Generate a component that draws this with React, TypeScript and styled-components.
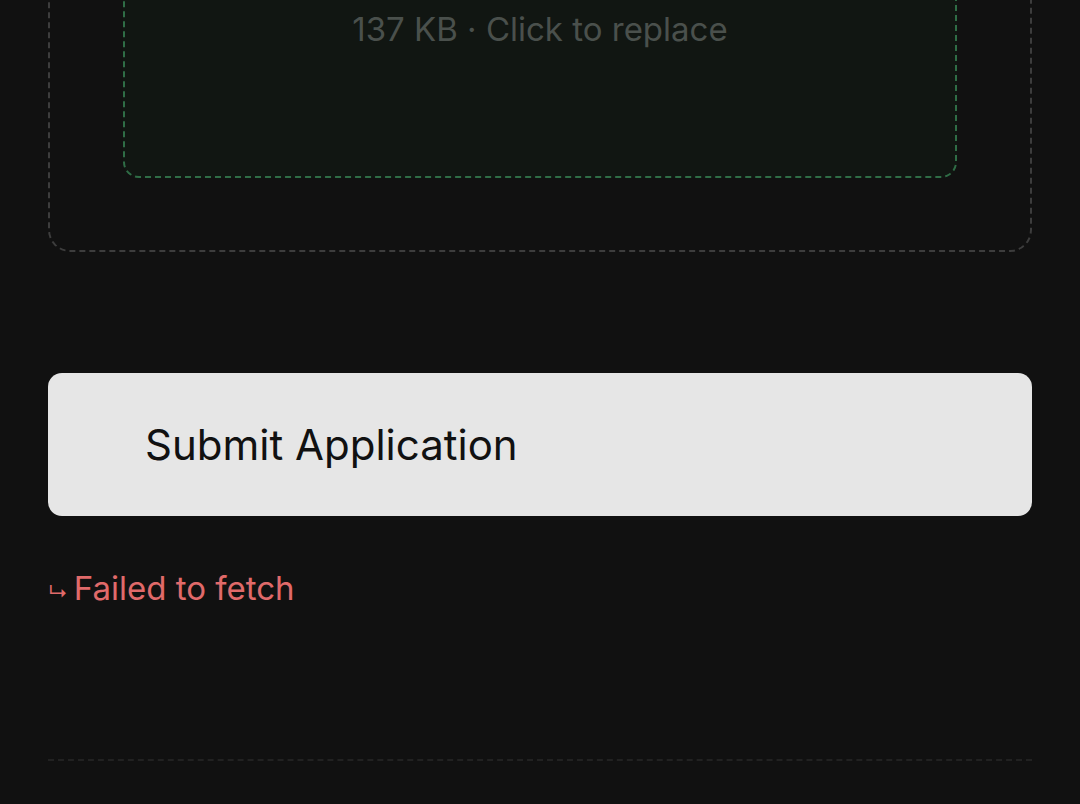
import React from 'react';
import styled, { createGlobalStyle } from 'styled-components';

const GlobalStyle = createGlobalStyle`
  html, body {
    margin: 0;
    padding: 0;
    background: #111111;
    overflow: hidden;
  }
  body {
    font-family: Inter, "Noto Sans", "Liberation Sans", sans-serif;
    -webkit-font-smoothing: antialiased;
  }
`;

const Page = styled.div`
  width: 1080px;
  height: 804px;
  box-sizing: border-box;
  padding: 0 48px;
  display: flex;
  flex-direction: column;
  overflow: hidden;
`;

const DropZone = styled.div`
  margin-top: -241px;
  padding: 73px 73px 72px;
  border: 2px dashed #3d3d3d;
  border-radius: 22px;
  box-sizing: border-box;
`;

const FilePreview = styled.div`
  border: 2px dashed #2f6d46;
  border-radius: 16px;
  background: #111612;
  padding: 120px 40px 127px;
  display: flex;
  flex-direction: column;
  align-items: center;
  gap: 12px;
`;

const FileName = styled.div`
  font-size: 34px;
  color: #6b726e;
`;

const FileMeta = styled.div`
  font-size: 33px;
  line-height: 40px;
  color: #4a504c;
`;

const SubmitButton = styled.button`
  margin-top: 121px;
  height: 143px;
  border: none;
  border-radius: 14px;
  background: #e6e6e6;
  color: #111111;
  font-family: inherit;
  font-size: 42px;
  text-align: left;
  padding: 0 97px;
  cursor: pointer;
`;

const ErrorLine = styled.div`
  margin-top: 52px;
  display: flex;
  align-items: baseline;
  gap: 6px;
  color: #e06a6a;
  font-size: 33px;
  line-height: 40px;
`;

const Arrow = styled.span`
  font-size: 20px;
`;

const Divider = styled.hr`
  margin: 146px 0 0;
  border: none;
  border-top: 2px dashed #222222;
`;

export default function App() {
  return (
    <>
      <GlobalStyle />
      <Page>
        <DropZone>
          <FilePreview>
            <FileName>resume.pdf</FileName>
            <FileMeta>137 KB · Click to replace</FileMeta>
          </FilePreview>
        </DropZone>
        <SubmitButton type="button">Submit Application</SubmitButton>
        <ErrorLine>
          <Arrow>↳</Arrow>
          <span>Failed to fetch</span>
        </ErrorLine>
        <Divider />
      </Page>
    </>
  );
}
